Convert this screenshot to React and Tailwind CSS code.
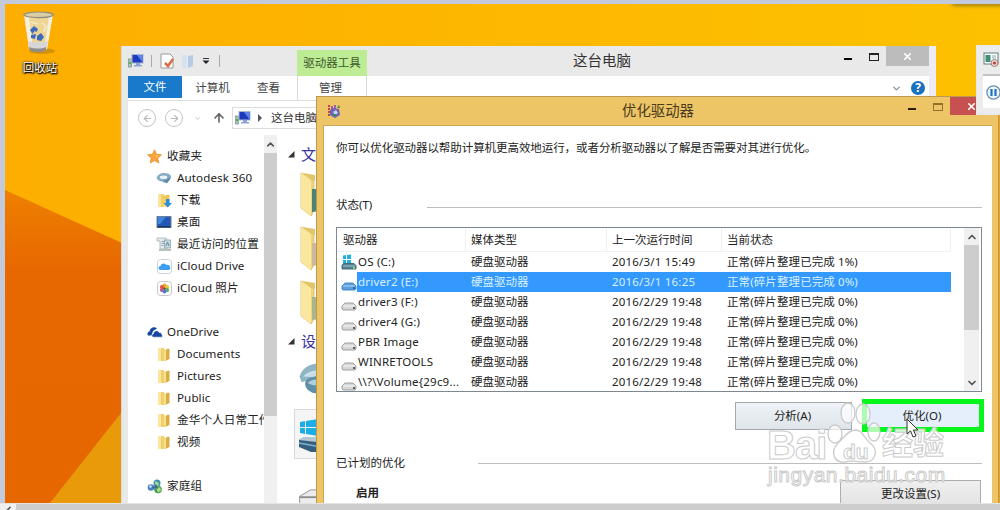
import { ChevronUp, ChevronDown, ChevronRight, ArrowLeft, ArrowRight, ArrowUp, X } from "lucide-react"

const drives = [
  { name: "OS (C:)", time: "2016/3/1 15:49", status: "正常(碎片整理已完成 1%)", os: true },
  { name: "driver2 (E:)", time: "2016/3/1 16:25", status: "正常(碎片整理已完成 0%)", selected: true },
  { name: "driver3 (F:)", time: "2016/2/29 19:48", status: "正常(碎片整理已完成 0%)" },
  { name: "driver4 (G:)", time: "2016/2/29 19:48", status: "正常(碎片整理已完成 0%)" },
  { name: "PBR Image", time: "2016/2/29 19:48", status: "正常(碎片整理已完成 0%)" },
  { name: "WINRETOOLS", time: "2016/2/29 19:48", status: "正常(碎片整理已完成 0%)" },
  { name: "\\\\?\\Volume{29c9...", time: "2016/2/29 19:48", status: "正常(碎片整理已完成 0%)" },
]

const favorites = [
  { name: "Autodesk 360", icon: AutodeskIcon },
  { name: "下载", icon: DownloadIcon },
  { name: "桌面", icon: DesktopIcon },
  { name: "最近访问的位置", icon: RecentIcon },
  { name: "iCloud Drive", icon: CloudIcon },
  { name: "iCloud 照片", icon: PhotosIcon },
]

const oneDrive = ["Documents", "Pictures", "Public", "金华个人日常工作", "视频"]

/* ICONS */

function PcIcon() {
  return (
    <svg width="16" height="14" viewBox="0 0 16 14" className="shrink-0">
      <rect x="0.5" y="5" width="3" height="8" fill="#a9c8a8" stroke="#7d97a0" strokeWidth="0.8" />
      <rect x="1" y="8" width="2" height="2" fill="#4fae3f" />
      <rect x="4" y="0.5" width="11" height="8.5" fill="#1c39c0" stroke="#a9b7cc" />
      <path d="M9 1h5.5v7.500z" fill="#5c86ea" />
      <path d="M8 9h4v2h2v1.500H6V11h2z" fill="#8ba3cf" />
    </svg>
  )
}

function StarIcon() {
  return (
    <svg width="15" height="15" viewBox="0 0 15 15" className="shrink-0">
      <path d="M7.500 .8l2 4.500 4.900.5-3.700 3.300 1.100 4.900-4.300-2.500L3.200 14l1.100-4.900L.6 5.800l4.900-.5z" fill="#f9a53c" stroke="#e98a25" strokeWidth="0.8" />
      <path d="M7.500 3.200l1.300 3 3 .3-2.300 2" fill="#ffd36a" />
    </svg>
  )
}

function AutodeskIcon() {
  return (
    <svg width="16" height="14" viewBox="0 0 16 14">
      <path d="M1 6C2 2.500 8 1 12 2.500s4 5 1 6.500l-2 3-4-.5C9 11 4 10.500 2 9S.6 7 1 6z" fill="#86abc4" />
      <ellipse cx="7.500" cy="6.300" rx="3.800" ry="1.800" fill="#e9f3f8" />
      <path d="M7 9.500c3 0 5-1 6-3l1 2-3 3.500z" fill="#5986a5" />
    </svg>
  )
}

function FolderIcon() {
  return (
    <svg width="14" height="15" viewBox="0 0 14 15">
      <path d="M1.500 1h5l1 1.500V14H1.500z" fill="#f0cf6c" />
      <path d="M1.500 1H4v13H1.500z" fill="#fbe69c" />
      <path d="M7 4l4-2.500 1.500.5v10L8 14z" fill="#d9ad45" />
      <path d="M7 4l2-1v10l-2 1z" fill="#f9e28e" />
    </svg>
  )
}

function DownloadIcon() {
  return (
    <svg width="15" height="15" viewBox="0 0 15 15">
      <path d="M1.500 1h5l1 1.500V14H1.500z" fill="#f4cf66" />
      <path d="M1.500 1H4v13H1.500z" fill="#fbe49a" />
      <path d="M7 3l4-1.500 1.500.5v10L8 14z" fill="#eec45c" />
      <path d="M9 6h3.500v4H15l-4.200 4.500L6.500 10H9z" fill="#2b8fd8" />
    </svg>
  )
}

function DesktopIcon() {
  return (
    <svg width="16" height="14" viewBox="0 0 16 14">
      <rect x="1" y="1.500" width="14" height="11" fill="#2257b5" stroke="#6a7f9c" />
      <path d="M2 2h8L4 9H2z" fill="#3d86dc" />
      <rect x="1.500" y="11" width="13" height="1.500" fill="#1b3560" />
    </svg>
  )
}

function RecentIcon() {
  return (
    <svg width="16" height="15" viewBox="0 0 16 15">
      <path d="M1 1h9l1 2v9H4V4H1z" fill="#e3ebee" stroke="#9eb0b8" strokeWidth="0.8" />
      <path d="M5.500 4.500h4M5.500 6.500h4M5.500 8.500h2" stroke="#8aa0ac" />
      <rect x="8.500" y="3" width="6" height="8" fill="#c4d9dd" stroke="#8fa5ad" strokeWidth="0.8" />
      <path d="M10 9l1.500-4L13 9" stroke="#5e8fa0" fill="none" />
      <path d="M3 12h12v2H3z" fill="#b9c1b4" />
    </svg>
  )
}

function CloudIcon() {
  return (
    <svg width="15" height="15" viewBox="0 0 15 15">
      <rect x="0.5" y="0.5" width="14" height="14" rx="3" fill="#fff" stroke="#c9d3dc" />
      <path d="M3.500 11a2 2 0 0 1 0-4 3.300 3.300 0 0 1 6-1 2.600 2.600 0 0 1 2 5z" fill="#3d9df0" />
    </svg>
  )
}

function PhotosIcon() {
  return (
    <svg width="15" height="15" viewBox="0 0 15 15">
      <rect x="0.5" y="0.5" width="14" height="14" rx="3" fill="#fff" stroke="#c9c6cc" />
      <circle cx="7.500" cy="4.500" r="2" fill="#f5a02c" />
      <circle cx="10.100" cy="6" r="2" fill="#d8cf35" />
      <circle cx="10.100" cy="9" r="2" fill="#57b15b" />
      <circle cx="7.500" cy="10.500" r="2" fill="#4a7fd0" />
      <circle cx="4.900" cy="9" r="2" fill="#b0559e" />
      <circle cx="4.900" cy="6" r="2" fill="#e8503c" />
      <circle cx="7.500" cy="7.500" r="1.200" fill="#7b3a2d" />
    </svg>
  )
}

function OneDriveIcon() {
  return (
    <svg width="16" height="12" viewBox="0 0 16 12" className="shrink-0">
      <path d="M1 9.500C-.3 8 .8 5.700 2.500 5.500 2.700 2 7.500-.2 10 2.500L6 5 4.500 9.500z" fill="#15489e" />
      <path d="M6.500 11.200C4.300 11 4.500 8 6.400 7.700 6.600 4.500 11 3.500 12.300 6.500c2 0 3.300 1.800 3.200 4.700z" fill="#15489e" stroke="#fff" strokeWidth="0.6" />
    </svg>
  )
}

function HomegroupIcon() {
  return (
    <svg width="16" height="15" viewBox="0 0 16 15" className="shrink-0">
      <circle cx="10" cy="4" r="3.500" fill="#3e8fae" />
      <circle cx="4" cy="8.500" r="3.300" fill="#4b83c2" />
      <circle cx="11" cy="10.500" r="3.800" fill="#46a04e" />
      <path d="M8 2l4 2-1 3-3-1zM9 9l4-.5 1 3-3 2z" fill="#a9dc8a" />
      <path d="M5 9l4-4 2 5z" fill="#274f9a" opacity="0.7" />
      <path d="M2 7l2-1 1 2-2 1z" fill="#cfe6f5" />
    </svg>
  )
}

function DiskIcon({ os, selected }) {
  return (
    <svg width="16" height="17" viewBox="0 0 16 17" className="shrink-0">
      {os && <path d="M2 1.500l3-.5v4H2zM6 1l4-.5V5H6zM2 6h3v4.500l-3-.5zM6 6h4v5l-4-.5z" fill="#1fb3dc" />}
      <path
        d={os ? "M1 11l2-1.500h10l2 2V15H1z" : "M1 12L4 9h8l3 3V15l-1 1H2l-1-1z"}
        fill={selected ? "#5d9fdc" : os ? "#53818f" : "#d6d6d6"}
        stroke={selected ? "#3c7fc4" : os ? "#3b6470" : "#979797"}
        strokeWidth="0.9"
      />
      <path d="M2 12h12" stroke={selected ? "#b3d5f2" : os ? "#a6c6cc" : "#f8f8f8"} />
      <rect x="12" y="13" width="2" height="2" fill={selected ? "#2a66ad" : os ? "#7ed36c" : "#5f5f5f"} />
    </svg>
  )
}

function DefragIcon() {
  return (
    <svg width="14" height="14" viewBox="0 0 14 14">
      <path d="M1 1h2v2H1zM1 4h2v2H1zM1 7h2v2H1zM1 10h2v2H1z" fill="#b5484a" />
      <path d="M4 2h2v3H4zM7 1h2v4H7z" fill="#a55cb0" />
      <path d="M3 6l3-2 6 1 1 6-5 3-5-3z" fill="#6d62b4" />
      <path d="M6 8l3-2 2 3-3 2z" fill="#c3d5ee" />
      <path d="M10 4l2-3 1 3zM6 10h3v2H6z" fill="#3e8d62" />
    </svg>
  )
}

function RecycleBinIcon() {
  return (
    <svg width="36" height="44" viewBox="0 0 36 44">
      <ellipse cx="20" cy="40" rx="13" ry="3" fill="#b97f12" opacity="0.6" />
      <path d="M2 3l5 35c4 3 14 3 18 0l6-35z" fill="#ecd9a4" opacity="0.9" />
      <path d="M2 3l5 35 4 1.500L7 5zM31 3l-6 35-3 1.500L27 5z" fill="#f5efdc" />
      <path d="M6 30l1.200 8c4 3 13 3 17 0L26 30c-6 2-14 2-20 0z" fill="#d7d6d8" />
      <path d="M7 36c5 2 13 2 17 0v3c-4 3-13 3-16.500 0z" fill="#8f8e88" />
      <ellipse cx="16.500" cy="3.800" rx="14.500" ry="2.800" fill="#d8cda6" stroke="#8e8c82" strokeWidth="1.200" />
      <path d="M8 19l4-4 4 3-1.500 3-2-1-2 3zM9 24l5-1-1 5-4-1zM15 25l4-3 3 4-3 4-4-1z" fill="#3c68c0" />
      <path d="M20 12l4 3-2 6M9 11l7 2" stroke="#f4eac8" strokeWidth="1.500" fill="none" />
    </svg>
  )
}

/* EXPLORER */

function TreeRow({ icon: Icon, name }) {
  return (
    <div className="flex h-[22px] items-center gap-[5px] pl-[28px]">
      <span className="flex w-4 shrink-0 justify-center"><Icon /></span>
      <span className="whitespace-nowrap">{name}</span>
    </div>
  )
}

function BigFolder({ accent }) {
  return (
    <svg width="30" height="46" viewBox="0 0 30 46" className="block">
      <path d="M1 2l13 5v33l-3 5L1 37z" fill="#f1d477" stroke="#d9b65a" strokeWidth="0.8" />
      <path d="M1 2l10 7v36L1 37z" fill="#fae79f" />
      <path d="M3 2l12 2v6L11 9z" fill="#e2c469" />
      <path d="M12 18h8v22l-8 1z" fill={accent} />
    </svg>
  )
}

function Explorer() {
  return (
    <div className="absolute left-[121px] top-[46px] flex h-[470px] w-[815px] flex-col border-l border-[#d9d9e2] bg-[#e9e9e9] pl-[6px] pr-[7px] shadow-[inset_-7px_0_0_#ecebf6]">
      {/* TITLE BAR */}
      <div className="flex h-[30px] shrink-0 items-start">
        <div className="flex h-[30px] w-[169px] items-center">
          <PcIcon />
          <span className="ml-[7px] h-3 w-px bg-[#a9a9a9]" />
          <svg width="14" height="16" viewBox="0 0 14 16" className="ml-[8px]">
            <path d="M1 1h9l3 3v11H1z" fill="#fff" stroke="#999" />
            <path d="M5 10l3 3 5-7" fill="none" stroke="#dd6a42" strokeWidth="2.500" />
          </svg>
          <svg width="13" height="15" viewBox="0 0 13 15" className="ml-[7px]">
            <path d="M1 1h5v13H1z" fill="#d5e3f1" />
            <path d="M7 2l5-1v11l-5 2z" fill="#b5cce3" />
          </svg>
          <svg width="8" height="8" viewBox="0 0 8 8" className="ml-[8px]">
            <path d="M1 1.500h6" stroke="#333" />
            <path d="M.5 3.500h7L4 7z" fill="#222" />
          </svg>
          <span className="ml-[9px] h-3 w-px bg-[#a9a9a9]" />
        </div>
        <div className="mt-[4px] flex h-[26px] w-[70px] items-center justify-center bg-[#bdec94] text-[11.5px] text-[#3d5a2c]">驱动器工具</div>
        <div className="flex h-[30px] flex-1 items-center pl-[206px] text-[14.5px] text-[#333]">这台电脑</div>
        <div className="flex h-5 items-start">
          <span className="mr-[17px] mt-[12px] h-[2px] w-2 bg-black" />
          <span className="mr-[7px] mt-[7px] h-2 w-[10px] border border-t-2 border-[#222]" />
          <span className="flex h-5 w-[43px] items-center justify-center bg-[#bcbcbc] text-white"><X size={11} strokeWidth={3.500} /></span>
        </div>
      </div>

      {/* RIBBON TABS */}
      <div className="flex h-[25px] shrink-0 border-b border-[#dcdde0] bg-white text-[11.5px] text-[#444]">
        <div className="flex h-[22px] w-[54px] items-center justify-center bg-[#1979ca] text-white">文件</div>
        <div className="flex w-[61px] items-center justify-center">计算机</div>
        <div className="flex w-[54px] items-center justify-center pr-[3px]">查看</div>
        <div className="flex w-[70px] items-center justify-center border-x border-[#d5dfd0] pr-[3px]">管理</div>
        <div className="ml-auto flex items-center gap-[9px] pr-[4px]">
          <ChevronDown size={11} strokeWidth={2.500} color="#888" />
          <span className="flex h-[14px] w-[14px] items-center justify-center rounded-full bg-[#1a71bd] text-[12px] font-bold text-white">?</span>
        </div>
      </div>

      {/* ADDRESS BAR */}
      <div className="flex h-[34px] shrink-0 items-center bg-white pl-[10px] text-[11.5px] text-[#333]">
        <span className="flex h-[18px] w-[18px] items-center justify-center rounded-full border border-[#c4c4c4] text-[#bbb]"><ArrowLeft size={11} strokeWidth={2.500} /></span>
        <span className="ml-[9px] flex h-[18px] w-[18px] items-center justify-center rounded-full border border-[#c4c4c4] text-[#bbb]"><ArrowRight size={11} strokeWidth={2.500} /></span>
        <ChevronDown size={7} color="#bbb" strokeWidth={3} className="ml-[11px]" />
        <ArrowUp size={14} strokeWidth={2.800} color="#666" className="ml-[11px]" />
        <div className="ml-[6px] flex h-[22px] flex-1 items-center border border-[#dcdcdc] pl-[2px]">
          <PcIcon />
          <svg width="5" height="8" viewBox="0 0 5 8" className="ml-[7px] mr-[8px]"><path d="M0 0l4 4-4 4z" fill="#555" /></svg>
          这台电脑
        </div>
      </div>

      <div className="flex min-h-0 flex-1 bg-white">
        {/* TREE */}
        <div className="w-[136px] shrink-0 overflow-hidden pt-[10px] text-[11.6px] tracking-[0.1px] text-[#222]">
          <div className="flex h-[22px] items-center gap-[5px] pl-[19px]"><StarIcon />收藏夹</div>
          {favorites.map((f) => <TreeRow key={f.name} icon={f.icon} name={f.name} />)}
          <div className="mt-[22px] flex h-[22px] items-center gap-[4px] pl-[19px]"><OneDriveIcon />OneDrive</div>
          {oneDrive.map((name) => <TreeRow key={name} icon={FolderIcon} name={name} />)}
          <div className="mt-[22px] flex h-[22px] items-center gap-[4px] pl-[19px]"><HomegroupIcon />家庭组</div>
        </div>
        <div className="flex w-[13px] shrink-0 flex-col items-center bg-[#f0f0f0] pt-[1px]">
          <div className="flex h-[17px] items-center"><ChevronUp size={11} strokeWidth={3.500} color="#555" /></div>
          <div className="h-[263px] w-full bg-[#cdcdcd]" />
        </div>

        {/* FOLDERS */}
        <div className="flex flex-1 flex-col pl-[11px] text-[15px] text-[#3a349b]">
          <div className="flex h-[24px] items-center gap-[6px] pt-[14px]">
            <svg width="7" height="7" viewBox="0 0 7 7"><path d="M6.500 0v6.500H0z" fill="#333" /></svg>文件夹
          </div>
          <div className="mt-[12px] flex flex-col gap-[8px] pl-[12px]">
            <BigFolder accent="#4c8374" />
            <BigFolder accent="#c9b9a0" />
            <BigFolder accent="#a9b58a" />
          </div>
          <div className="mt-[5px] flex h-[22px] items-center gap-[6px]">
            <svg width="7" height="7" viewBox="0 0 7 7"><path d="M6.500 0v6.500H0z" fill="#333" /></svg>设备和驱动器
          </div>
          <svg width="36" height="38" viewBox="0 0 36 38" className="ml-[10px] mt-[10px]">
            <path d="M0 16C2 7 10 2 24 1v18L2 22z" fill="#8fb4c4" />
            <path d="M4 16c4-5 10-7 20-7v8z" fill="#c9e0e8" />
            <path d="M6 24c0-6 8-9 20-9v20C14 36 6 31 6 24z" fill="#5f90a8" />
            <path d="M9 23c4-4 9-4 15-4v6c-6 1-11 1-15-2z" fill="#b2d0dc" />
          </svg>
          <div className="ml-[6px] mt-[12px] h-[54px] w-[200px] border border-[#d9d9d9] bg-[#f5f5f5] pl-[4px] pt-[9px]">
            <svg width="36" height="38" viewBox="0 0 36 38">
              <path d="M1 3l5-1v6H1zM7 2l12-2v8H7zM1 9h5v6l-5-1zM7 9h12v8L7 15z" fill="#1cade4" />
              <path d="M0 20l5-2h22v6L0 22z" fill="#b4c8d4" />
              <path d="M0 21l27 3v9H12L0 28z" fill="#355f7d" />
              <path d="M0 24l27 5" stroke="#7fb2cf" strokeWidth="1.500" />
            </svg>
          </div>
          <svg width="36" height="30" viewBox="0 0 36 30" className="ml-[10px] mt-[30px]">
            <path d="M0 8L12 1h20v20H0z" fill="#ececec" stroke="#8c8c8c" />
            <path d="M0 9h30" stroke="#8c8c8c" strokeWidth="2" />
          </svg>
        </div>
      </div>
    </div>
  )
}

/* OPTIMIZE DRIVES */

function OptimizeDialog() {
  return (
    <div className="absolute left-[316px] top-[96px] flex h-[430px] w-[683px] flex-col border border-[#bd9850] bg-[#eec566] px-[6px]">
      <div className="flex h-[28px] shrink-0 items-start">
        <div className="flex h-[28px] w-[299px] items-center pl-[4px]"><DefragIcon /></div>
        <div className="flex h-[28px] flex-1 items-center text-[14.4px] text-[#4a3b1c]">优化驱动器</div>
        <span className="mr-[17px] mt-[11px] h-[2px] w-2 bg-[#2b1d00]" />
        <span className="mr-[7px] mt-[6px] h-2 w-[10px] border border-t-2 border-[#94702b]" />
        <span className="flex h-[18px] w-[42px] items-center justify-center bg-[#c75050] text-white"><X size={11} strokeWidth={3.500} /></span>
      </div>

      <div className="flex-1 border-l border-t border-[#cfa653] bg-white pl-[12px] pr-[10px] text-[11.5px] text-[#222]">
        <p className="mt-[11px] h-[22px] whitespace-nowrap leading-[22px] tracking-[-0.07px]">你可以优化驱动器以帮助计算机更高效地运行，或者分析驱动器以了解是否需要对其进行优化。</p>
        <div className="mt-[35px] flex h-[22px] items-center">
          <span className="w-[91px]">状态(T)</span>
          <span className="mt-[4px] h-px flex-1 bg-[#bdbdbd]" />
        </div>

        {/* DRIVE LIST */}
        <div className="mt-[11px] flex h-[165px] border border-[#7f8790]">
          <div className="flex-1 overflow-hidden">
            <div className="flex h-[24px] w-[614px] items-center border-b border-r border-[#f0f0f0]">
              <span className="flex h-full w-[129px] items-center border-r border-[#f0f0f0] pl-[6px]">驱动器</span>
              <span className="flex h-full w-[141px] items-center border-r border-[#f0f0f0] pl-[5px]">媒体类型</span>
              <span className="flex h-full w-[115px] items-center border-r border-[#f0f0f0] pl-[5px]">上一次运行时间</span>
              <span className="pl-[5px]">当前状态</span>
            </div>
            {drives.map((d) => (
              <div key={d.name} className="flex h-[20px] w-[614px] items-center pl-[4px]">
                <DiskIcon os={d.os} selected={d.selected} />
                <div className={`flex h-[20px] flex-1 items-center whitespace-nowrap ${d.selected ? "bg-[#3399ff] text-[#d9f0ff]" : ""}`}>
                  <span className="w-[114px] pl-px tracking-[0.2px]">{d.name}</span>
                  <span className="w-[141px]">硬盘驱动器</span>
                  <span className="w-[115px] tracking-[0.2px]">{d.time}</span>
                  <span className="tracking-[0.1px]">{d.status}</span>
                </div>
              </div>
            ))}
          </div>
          <div className="mr-[2px] flex w-[15px] flex-col items-center bg-[#f0f0f0]">
            <div className="flex h-[17px] items-center"><ChevronUp size={12} strokeWidth={3.500} color="#555" /></div>
            <div className="h-[85px] w-full bg-[#cdcdcd]" />
            <div className="mt-auto flex h-[17px] items-center"><ChevronDown size={12} strokeWidth={3.500} color="#555" /></div>
          </div>
        </div>

        <div className="-mr-[2px] mt-[7px] flex items-center justify-end gap-[10px]">
          <button className="h-[28px] w-[117px] border border-[#a3a8ad] bg-linear-to-b from-[#eef2f6] to-[#dfe5ea] pr-[2px]">分析(A)</button>
          <button className="h-[33px] w-[122px] border-[5px] border-[#06f51a] bg-[#e5effc] pr-[2px]">优化(O)</button>
        </div>

        <div className="mt-[20px] flex h-[22px] items-center">
          <span className="w-[142px]">已计划的优化</span>
          <span className="h-px flex-1 bg-[#bdbdbd]" />
        </div>
        <div className="mt-[6px] flex items-start justify-between pl-[20px] pr-px">
          <span className="mt-[4px] font-bold">启用</span>
          <button className="h-[28px] w-[141px] border border-[#acacac] bg-linear-to-b from-[#efefef] to-[#e2e2e2]">更改设置(S)</button>
        </div>
      </div>
    </div>
  )
}

/* RECORDER PANEL */

function Recorder() {
  return (
    <div className="absolute left-[976px] top-[45px] flex h-[70px] w-[40px] flex-col border border-[#e3e8f0] bg-[#ececec] pl-[6px]">
      <div className="flex h-[30px] items-center border-b-2 border-[#c4c4c4] pb-[1px]">
        <svg width="17" height="16" viewBox="0 0 17 16">
          <rect x="1" y="1" width="14" height="11" fill="#fff" stroke="#5f7f7d" />
          <rect x="2.500" y="3" width="5" height="7" fill="#3d8f7c" />
          <path d="M9 4h4M9 6h4" stroke="#8aa" />
          <circle cx="11.500" cy="11" r="3.500" fill="#e9d9d6" stroke="#9b8480" />
          <circle cx="11.500" cy="11" r="1.600" fill="#c73a2d" />
        </svg>
      </div>
      <div className="mb-[6px] flex flex-1 items-center bg-white pl-[3px]">
        <svg width="15" height="15" viewBox="0 0 15 15">
          <circle cx="7.500" cy="7.500" r="6.600" fill="#eef5fb" stroke="#6d8fae" strokeWidth="1.300" />
          <path d="M5.500 4v7M9.500 4v7" stroke="#1d72c2" strokeWidth="2.200" />
        </svg>
      </div>
    </div>
  )
}

function Watermark() {
  return (
    <div className="pointer-events-none absolute left-[767px] top-[400px] h-[90px] w-[184px] font-['Liberation_Sans','Noto_Sans_CJK_SC',sans-serif] font-bold text-white/80 [-webkit-text-stroke:1px_#cbcbcb]">
      <svg width="60" height="64" viewBox="0 0 60 64" className="absolute left-[58px] top-0" fill="#ffffffaa" stroke="#cbcbcb" strokeWidth="1.300">
        <ellipse cx="10" cy="34" rx="7" ry="9" />
        <ellipse cx="23" cy="13" rx="7" ry="10" />
        <ellipse cx="38" cy="14" rx="7" ry="10" />
        <ellipse cx="49" cy="32" rx="6" ry="9" />
        <path d="M30 30c7 0 8 6 14 12 12 9 5 20-4 20-7 0-13-2-20 0-10 1-16-9-7-19 6-5 10-13 17-13z" />
      </svg>
      <span className="absolute left-0 top-[25px] text-[40px] leading-[40px] tracking-[-1px]">Bai</span>
      <span className="absolute left-[76px] top-[41px] text-[21px] leading-[22px]">du</span>
      <span className="absolute left-[115px] top-[28px] text-[31px] leading-[32px]">经验</span>
      <span className="absolute left-[1px] top-[63px] text-[21px] font-normal leading-[24px] tracking-[0.5px]">jingyan.baidu.com</span>
    </div>
  )
}

function App() {
  return (
    <div className="flex h-[510px] w-[1000px] flex-col overflow-hidden bg-[#c2cadb] font-['Noto_Sans','Noto_Sans_CJK_SC',sans-serif]">
      <div className="relative ml-[5px] mt-[4px] h-[499px] overflow-hidden bg-linear-to-r from-[#fdae00] to-[#fdc100]">
        {/* WALLPAPER */}
        <svg width="995" height="499" viewBox="0 0 995 499" className="absolute inset-0">
          <defs>
            <linearGradient id="flame" x1="0" y1="0" x2="0" y2="1">
              <stop offset="0" stopColor="#ee8000" />
              <stop offset="0.25" stopColor="#e76800" />
              <stop offset="1" stopColor="#e66700" />
            </linearGradient>
          </defs>
          <path d="M0 186l117 53v260H0z" fill="url(#flame)" />
          <path d="M116 409v90H45z" fill="#e99a08" />
          <path d="M990 111h5v388h-5z" fill="#eda215" />
        </svg>

        {/* coordinates of the windows are screen based */}
        <div className="absolute -left-[5px] -top-[4px] h-[510px] w-[1000px]">
          <div className="absolute left-[22px] top-[11px] flex w-[36px] flex-col items-center">
            <RecycleBinIcon />
            <span className="mt-[4px] whitespace-nowrap text-[11.5px] leading-[18px] text-white [text-shadow:1px_1px_1px_#000,0_0_2px_#000,0_1px_2px_#000]">回收站</span>
          </div>
          <Explorer />
          <OptimizeDialog />
          <Recorder />
          <Watermark />
          <div className="absolute left-[952px] top-[1px] h-[3px] w-[60px] shadow-[0_1px_4px_#6b5a20]" />
          <svg width="14" height="21" viewBox="0 0 14 21" className="absolute left-[906px] top-[418px]">
            <path d="M1 1v15l3.500-3.200L7 19l3-1.200-2.600-5.800H12z" fill="#fff" stroke="#333" />
          </svg>
        </div>
      </div>

      {/* SCROLLBAR */}
      <div className="flex h-[7px] items-start border-t border-[#e4e4e4] bg-[#cdcdcd]">
        <div className="flex h-[6px] w-4 justify-center overflow-hidden bg-[#f0f0f0]">
          <ChevronRight size={13} strokeWidth={3} color="#555" className="shrink-0 rotate-180" />
        </div>
      </div>
    </div>
  )
}

export default App
